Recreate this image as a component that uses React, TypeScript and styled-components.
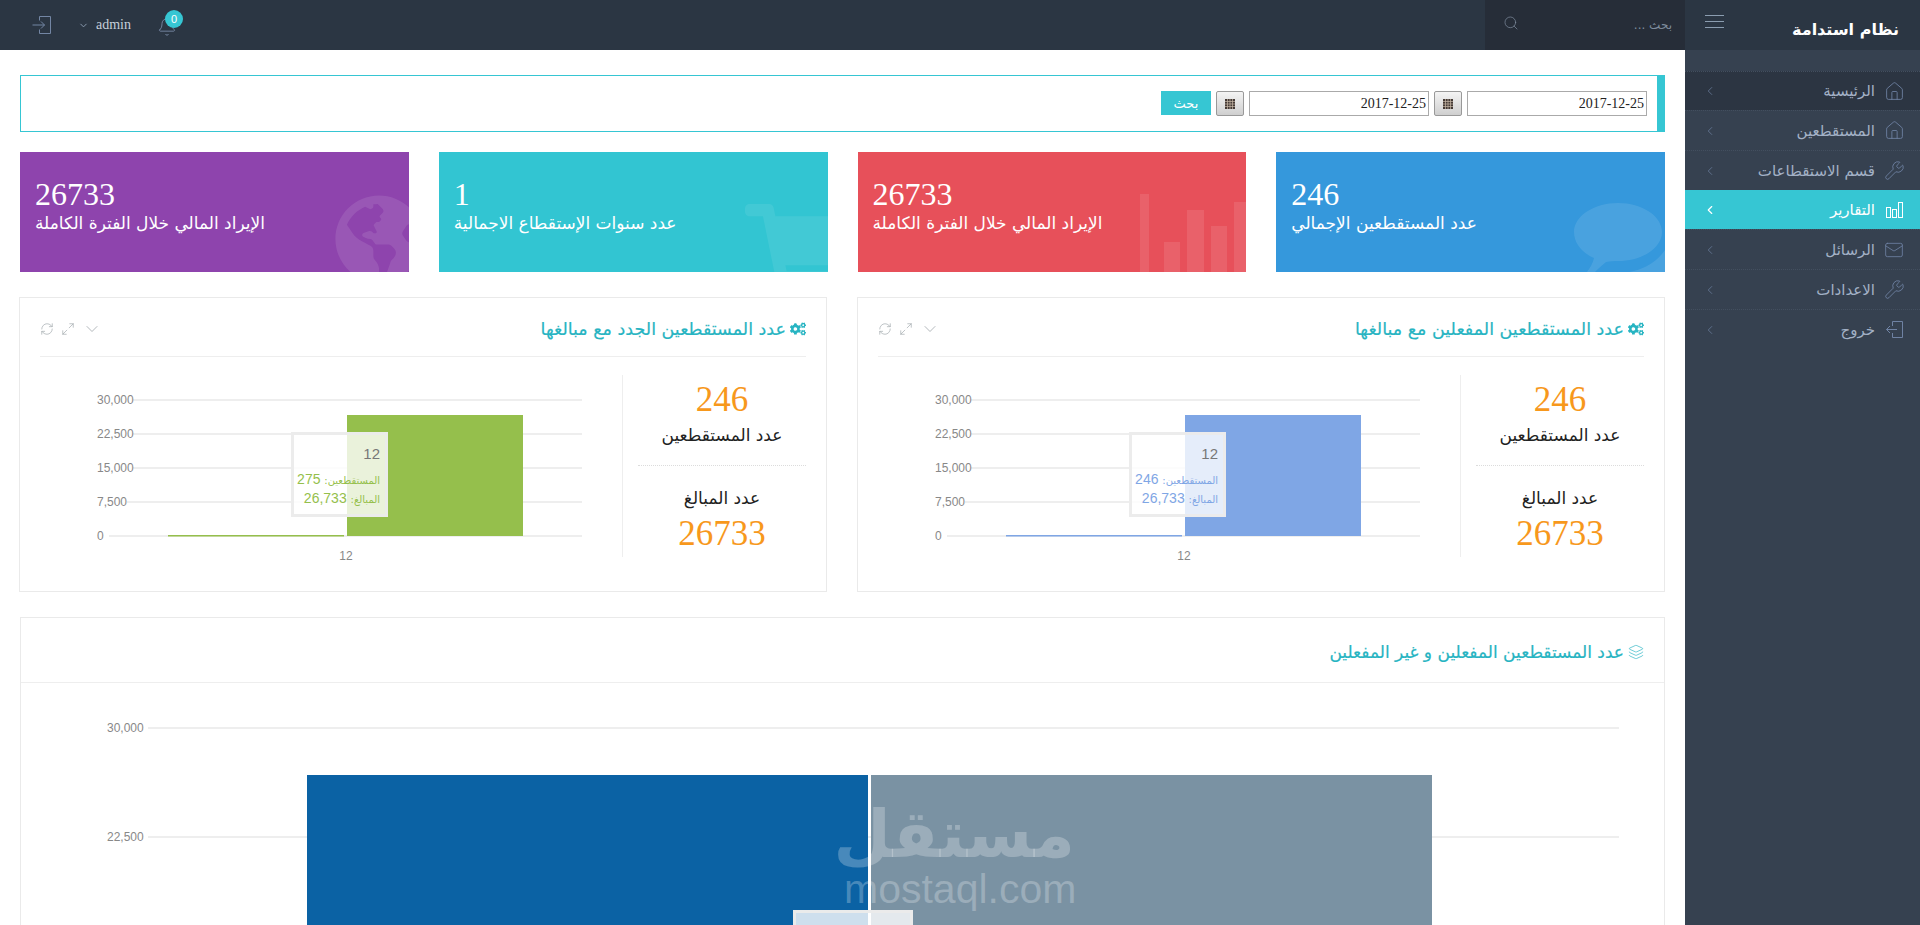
import type { ReactNode } from "react";
import styled, { createGlobalStyle } from "styled-components";
import { Bell, ChevronDown, ChevronLeft, Home, Layers, Mail, Maximize2, RefreshCw, Search, Wrench } from "lucide-react";
import { FaCogs, FaGlobeAmericas, FaShoppingCart } from "react-icons/fa";

const ARABIC = `"DejaVu Sans", "Noto Sans", sans-serif`;
const SERIF = `"Liberation Serif", serif`;
const ARIAL = `"Liberation Sans", sans-serif`;
const TEAL = "#36c6d3";

const GlobalStyles = createGlobalStyle`
    html, body {
        margin: 0;
        height: 100%;
        overflow: hidden;
        background: #fff;
    }
    * {
        box-sizing: border-box;
    }
`;

// Shell
const AppContainer = styled.div`
    position: relative;
    display: flex;
    height: 925px;
    width: 1920px;
    overflow: hidden;
    font-family: ${ARABIC};
`;

const SidebarWrap = styled.aside`
    width: 235px;
    flex: none;
    background: #364150;
`;

const Brand = styled.div`
    height: 50px;
    background: #2b3643;
    display: flex;
    align-items: center;
    justify-content: space-between;
    padding: 0 21px 0 20px;
`;

const BrandName = styled.span`
    color: #fff;
    font-size: 16px;
    line-height: 30px;
    font-weight: 700;
    margin-top: 10px;
    white-space: nowrap;
`;

const Burger = styled.div`
    width: 19px;
    height: 13px;
    margin-top: -7px;
    border-top: 1px solid #8b9db0;
    border-bottom: 1px solid #8b9db0;
    position: relative;
    &::after {
        content: "";
        position: absolute;
        top: 5px;
        left: 0;
        right: 0;
        height: 1px;
        background: #8b9db0;
    }
`;

const Menu = styled.nav`
    padding-top: 21px;
`;

const MenuRow = styled.div<{ $active?: boolean; $first?: boolean }>`
    height: ${(p) => (p.$active || p.$first ? "39px" : "40px")};
    display: flex;
    align-items: center;
    padding: 0 15px 0 18px;
    gap: 8px;
    background: ${(p) => (p.$active ? TEAL : p.$first ? "#2c3542" : "transparent")};
    color: ${(p) => (p.$active ? "#fff" : "#a3b1c6")};
    border-top: 1px dotted ${(p) => (p.$active ? TEAL : "#434f5f")};
    font-size: 15px;
    svg {
        flex: none;
        color: ${(p) => (p.$active ? "#fff" : "#6f82a3")};
    }
`;

const MenuIcon = styled.span`
    width: 22px;
    flex: none;
    display: flex;
    align-items: center;
    justify-content: center;
`;

const MenuLabel = styled.span`
    flex: 1;
    white-space: nowrap;
`;

const Main = styled.main`
    flex: 1;
    min-width: 0;
    display: flex;
    flex-direction: column;
`;

// Top bar
const TopBar = styled.header`
    height: 50px;
    flex: none;
    background: #2b3643;
    display: flex;
    align-items: center;
`;

const SearchBox = styled.div`
    width: 200px;
    height: 50px;
    background: #262d38;
    display: flex;
    align-items: center;
    justify-content: space-between;
    padding: 0 13px 0 18px;
    color: #7e8b9c;
    font-size: 12px;
    svg {
        margin-top: -5px;
        color: #8593a5;
    }
`;

const TopActions = styled.div`
    margin-right: auto;
    display: flex;
    align-items: center;
    direction: ltr;
    padding-left: 32px;
    width: 210px;
`;

const UserName = styled.span`
    font-family: ${SERIF};
    font-size: 14px;
    color: #c6cfda;
    margin-left: 7px;
`;

const UserMenu = styled.div`
    display: flex;
    align-items: center;
    margin-left: 27px;
    color: #8ea0b5;
`;

const BellWrap = styled.div`
    position: relative;
    margin: 3px 0 0 26px;
    height: 20px;
    color: #7f92ae;
`;

const BellBadge = styled.span`
    position: absolute;
    left: 8px;
    top: -7px;
    width: 18px;
    height: 18px;
    border-radius: 50%;
    background: ${TEAL};
    color: #fff;
    font: 11px/18px ${ARIAL};
    text-align: center;
`;

// Content
const Content = styled.div`
    padding: 25px 20px 0;
`;

const FilterBar = styled.div`
    height: 57px;
    border: 1px solid ${TEAL};
    border-right: 8px solid ${TEAL};
    display: flex;
    align-items: center;
    gap: 5px;
    padding: 0 10px;
`;

const DateInput = styled.input`
    width: 180px;
    height: 25px;
    border: 1px solid #aaa;
    background: #fff;
    font: 14px ${SERIF};
    color: #222;
    padding: 0 2px;
    text-align: right;
`;

const CalendarButton = styled.button`
    width: 28px;
    height: 25px;
    padding: 0;
    border: 1px solid #999;
    border-radius: 2px;
    background: linear-gradient(#f4f4f4, #cfcfcf);
    display: flex;
    align-items: center;
    justify-content: center;
`;

const SearchButton = styled.button`
    width: 50px;
    height: 24px;
    margin-top: -1px;
    border: 0;
    background: ${TEAL};
    color: #fff;
    font: 13px ${ARABIC};
    padding: 0;
`;

const CardGrid = styled.div`
    display: grid;
    grid-template-columns: repeat(4, 1fr);
    gap: 30px;
    margin-top: 20px;
`;

const StatCard = styled.div<{ $bg: string }>`
    position: relative;
    height: 120px;
    overflow: hidden;
    background: ${(p) => p.$bg};
    color: #fff;
    padding: 24px 15px 0;
    text-align: left;
`;

const CardNumber = styled.div`
    font: 32px/36px ${SERIF};
`;

const CardLabel = styled.div`
    position: relative;
    z-index: 1;
    font-size: 17px;
    line-height: 22px;
`;

const CardArt = styled.div<{ $left: number; $top: number; $alpha?: number }>`
    position: absolute;
    left: ${(p) => p.$left}px;
    top: ${(p) => p.$top}px;
    color: rgba(255, 255, 255, ${(p) => p.$alpha ?? 0.1});
    line-height: 0;
`;

const ChartGrid = styled.div`
    display: grid;
    grid-template-columns: repeat(2, 1fr);
    gap: 30px;
    margin-top: 25px;
`;

const Panel = styled.section`
    height: 295px;
    border: 1px solid #eaeaea;
    padding: 0 20px;
`;

const PanelHead = styled.div`
    height: 59px;
    padding-top: 4px;
    border-bottom: 1px solid #eeeeee;
    display: flex;
    align-items: center;
    justify-content: space-between;
`;

const PanelTitle = styled.h3<{ $size: number }>`
    margin: 0;
    display: flex;
    align-items: center;
    gap: 4px;
    font-size: ${(p) => p.$size}px;
    font-weight: 400;
    color: #27b4c2;
    -webkit-text-stroke: 0.2px #27b4c2;
`;

const PanelTools = styled.div`
    display: flex;
    align-items: center;
    gap: 7px;
    color: #a4aaaf;
    direction: ltr;
`;

const PanelBody = styled.div`
    display: flex;
    padding-top: 18px;
`;

const StatColumn = styled.div`
    width: 184px;
    height: 182px;
    flex: none;
    border-left: 1px solid #eeeeee;
    display: flex;
    flex-direction: column;
    text-align: center;
`;

const StatBlock = styled.div<{ $top?: boolean }>`
    margin-left: 15px;
    height: 91px;
    padding-top: ${(p) => (p.$top ? "5px" : "17px")};
    border-bottom: ${(p) => (p.$top ? "1px dotted #dcdcdc" : "0")};
`;

const StatNumber = styled.div`
    font: 35px/40px ${SERIF};
    color: #f7981c;
`;

const StatLabel = styled.div`
    font-size: 17px;
    line-height: 24px;
    margin: 3px 0 4px;
    color: #222;
    white-space: nowrap;
`;

const ChartBox = styled.div`
    position: relative;
    flex: 1;
    height: 182px;
`;

const ChartSvg = styled.svg`
    display: block;
    direction: ltr;
    overflow: visible;
`;

const AxisText = styled.text`
    font: 12px ${ARIAL};
    fill: #888;
`;

const Tip = styled.div<{ $left: number; $top: number; $w: number; $h: number }>`
    position: absolute;
    left: ${(p) => p.$left}px;
    top: ${(p) => p.$top}px;
    width: ${(p) => p.$w}px;
    height: ${(p) => p.$h}px;
    background: rgba(255, 255, 255, 0.8);
    border: 3px solid rgba(235, 235, 235, 0.95);
    padding: 9px 5px 0 0;
    text-align: right;
    font-family: ${ARIAL};
`;

const TipTitle = styled.div`
    font-size: 15px;
    line-height: 20px;
    margin-bottom: 6px;
    color: #777;
`;

const TipRow = styled.div<{ $color: string }>`
    font-size: 14px;
    line-height: 19px;
    color: ${(p) => p.$color};
    white-space: nowrap;
    span {
        font: 10px ${ARABIC};
    }
`;

const WidePanel = styled.section`
    margin-top: 25px;
    height: 400px;
    border: 1px solid #eaeaea;
`;

const WideHead = styled.div`
    height: 65px;
    padding: 4px 20px 0;
    border-bottom: 1px solid #eeeeee;
    display: flex;
    align-items: center;
`;

const WideBody = styled.div`
    position: relative;
    height: 300px;
`;

const Watermark = styled.div`
    position: absolute;
    left: 844px;
    top: 797px;
    width: 231px;
    text-align: center;
    color: rgba(255, 255, 255, 0.25);
    pointer-events: none;
`;

const WatermarkAr = styled.div`
    font: 700 66px/76px ${ARABIC};
    padding-left: 6px;
`;

const WatermarkEn = styled.div`
    font: 41px/32px ${ARIAL};
    direction: ltr;
    white-space: nowrap;
`;

// Icons
const EnterIcon = () => (
    <svg width="19" height="18" viewBox="0 0 19 18" fill="none" stroke="#7386a4" strokeWidth="1">
        <path d="M7.5 4.5V.5h11v17h-11v-4" />
        <path d="M.5 9h12M9 5.5 12.5 9 9 12.5" />
    </svg>
);

const ExitIcon = () => (
    <svg width="17" height="17" viewBox="0 0 17 17" fill="none" stroke="currentColor" strokeWidth="1">
        <path d="M6.5 5V.5h10v16h-10V12" />
        <path d="M11 8.5H.5M4 5 .5 8.5 4 12" />
    </svg>
);

const ChartIcon = () => (
    <svg width="17" height="16" viewBox="0 0 17 16" fill="none" stroke="currentColor" strokeWidth="1">
        <rect x=".5" y="5.5" width="4" height="10" />
        <rect x="6.5" y="7.5" width="4" height="8" />
        <rect x="12.5" y=".5" width="4" height="15" />
    </svg>
);

const GridGlyph = () => (
    <svg width="10" height="10" viewBox="0 0 10 10">
        <rect width="10" height="10" fill="#443a36" />
        <path d="M2.5 0v10M5 0v10M7.5 0v10M0 2.5h10M0 5h10M0 7.5h10" stroke="#c9b9a8" strokeWidth=".7" />
    </svg>
);

const BarsArt = () => (
    <svg width="106" height="78" viewBox="0 0 106 78" fill="currentColor">
        <rect x="0" y="0" width="9" height="78" />
        <rect x="24" y="48" width="16" height="30" />
        <rect x="47" y="16" width="17" height="62" />
        <rect x="71" y="32" width="16" height="46" />
        <rect x="94" y="8" width="12" height="70" />
    </svg>
);

const BubbleArt = () => (
    <svg width="91" height="69" viewBox="0 0 91 69" fill="currentColor">
        <path d="M44 0c24 0 44 13 44 29S68 58 44 58c-4 0-8 0-12 1-4 3-8 7-11 10h-8c3-4 6-9 7-14C8 50 0 40 0 29 0 13 20 0 44 0Z" />
        <path d="M91 47v22H55c14-2 28-10 36-22Z" />
    </svg>
);

type ChartProps = { color: string; tipValue: string };

const MiniChart = ({ color, tipValue }: ChartProps) => {
    const rows = [
        { label: "30,000", y: 25, from: 93 },
        { label: "22,500", y: 59, from: 93 },
        { label: "15,000", y: 93, from: 93 },
        { label: "7,500", y: 127, from: 87 },
        { label: "0", y: 161, from: 69 },
    ];
    return (
        <ChartBox>
            <ChartSvg width="582" height="182">
                {rows.map((r) => (
                    <g key={r.label}>
                        <line x1={r.from} x2="542" y1={r.y} y2={r.y} stroke="#e8e8e8" strokeWidth="1.5" />
                        <AxisText x="57" y={r.y + 4}>
                            {r.label}
                        </AxisText>
                    </g>
                ))}
                <rect x="128" y="160" width="176" height="1.5" fill={color} />
                <rect x="307" y="40" width="176" height="121" fill={color} />
                <AxisText x="306" y="185" textAnchor="middle">
                    12
                </AxisText>
            </ChartSvg>
            <Tip $left={251} $top={57} $w={97} $h={85}>
                <TipTitle>12</TipTitle>
                <TipRow $color={color}>
                    <span>المستقطعين:</span> {tipValue}
                </TipRow>
                <TipRow $color={color}>
                    <span>المبالغ:</span> 26,733
                </TipRow>
            </Tip>
        </ChartBox>
    );
};

const ChartPanel = ({ title, color, tipValue }: { title: string } & ChartProps) => (
    <Panel>
        <PanelHead>
            <PanelTitle $size={17.5}>
                <FaCogs size={16} />
                {title}
            </PanelTitle>
            <PanelTools>
                <RefreshCw size={14} strokeWidth={1.2} />
                <Maximize2 size={14} strokeWidth={1.2} />
                <ChevronDown size={20} strokeWidth={1} />
            </PanelTools>
        </PanelHead>
        <PanelBody>
            <StatColumn>
                <StatBlock $top>
                    <StatNumber>246</StatNumber>
                    <StatLabel>عدد المستقطعين</StatLabel>
                </StatBlock>
                <StatBlock>
                    <StatLabel>عدد المبالغ</StatLabel>
                    <StatNumber>26733</StatNumber>
                </StatBlock>
            </StatColumn>
            <MiniChart color={color} tipValue={tipValue} />
        </PanelBody>
    </Panel>
);

const menuItems: { label: string; icon: ReactNode; first?: boolean; active?: boolean }[] = [
    { label: "الرئيسية", icon: <Home size={21} strokeWidth={1} />, first: true },
    { label: "المستقطعين", icon: <Home size={21} strokeWidth={1} /> },
    { label: "قسم الاستقطاعات", icon: <Wrench size={21} strokeWidth={1} /> },
    { label: "التقارير", icon: <ChartIcon />, active: true },
    { label: "الرسائل", icon: <Mail size={20} strokeWidth={1} /> },
    { label: "الاعدادات", icon: <Wrench size={21} strokeWidth={1} /> },
    { label: "خروج", icon: <ExitIcon /> },
];

function App() {
    return (
        <AppContainer dir="rtl">
            <GlobalStyles />

            <SidebarWrap>
                <Brand>
                    <BrandName>نظام استدامة</BrandName>
                    <Burger />
                </Brand>
                <Menu>
                    {menuItems.map((item) => (
                        <MenuRow key={item.label} $active={item.active} $first={item.first}>
                            <MenuIcon>{item.icon}</MenuIcon>
                            <MenuLabel>{item.label}</MenuLabel>
                            <ChevronLeft size={14} strokeWidth={item.active ? 2 : 1.2} />
                        </MenuRow>
                    ))}
                </Menu>
            </SidebarWrap>

            <Main>
                <TopBar>
                    <SearchBox>
                        <span>بحث ...</span>
                        <Search size={16} strokeWidth={1} />
                    </SearchBox>
                    <TopActions>
                        <EnterIcon />
                        <UserMenu>
                            <ChevronDown size={11} />
                            <UserName>admin</UserName>
                        </UserMenu>
                        <BellWrap>
                            <Bell size={20} strokeWidth={1} />
                            <BellBadge>0</BellBadge>
                        </BellWrap>
                    </TopActions>
                </TopBar>

                <Content>
                    <FilterBar>
                        <DateInput readOnly value="2017-12-25" />
                        <CalendarButton>
                            <GridGlyph />
                        </CalendarButton>
                        <DateInput readOnly value="2017-12-25" />
                        <CalendarButton>
                            <GridGlyph />
                        </CalendarButton>
                        <SearchButton>بحث</SearchButton>
                    </FilterBar>

                    <CardGrid>
                        <StatCard $bg="#3598dc">
                            <CardNumber>246</CardNumber>
                            <CardLabel>عدد المستقطعين الإجمالي</CardLabel>
                            <CardArt $left={298} $top={51}>
                                <BubbleArt />
                            </CardArt>
                        </StatCard>
                        <StatCard $bg="#e7505a">
                            <CardNumber>26733</CardNumber>
                            <CardLabel>الإيراد المالي خلال الفترة الكاملة</CardLabel>
                            <CardArt $left={282} $top={42}>
                                <BarsArt />
                            </CardArt>
                        </StatCard>
                        <StatCard $bg="#32c5d2">
                            <CardNumber>1</CardNumber>
                            <CardLabel>عدد سنوات الإستقطاع الاجمالية</CardLabel>
                            <CardArt $left={306} $top={46} $alpha={0.08}>
                                <FaShoppingCart size={110} />
                            </CardArt>
                        </StatCard>
                        <StatCard $bg="#8e44ad">
                            <CardNumber>26733</CardNumber>
                            <CardLabel>الإيراد المالي خلال الفترة الكاملة</CardLabel>
                            <CardArt $left={314} $top={42}>
                                <FaGlobeAmericas size={90} />
                            </CardArt>
                        </StatCard>
                    </CardGrid>

                    <ChartGrid>
                        <ChartPanel title="عدد المستقطعين المفعلين مع مبالغها" color="#7fa6e5" tipValue="246" />
                        <ChartPanel title="عدد المستقطعين الجدد مع مبالغها" color="#95bf4c" tipValue="275" />
                    </ChartGrid>

                    <WidePanel>
                        <WideHead>
                            <PanelTitle $size={17}>
                                <Layers size={16} strokeWidth={1} />
                                عدد المستقطعين المفعلين و غير المفعلين
                            </PanelTitle>
                        </WideHead>
                        <WideBody>
                            <ChartSvg width="1643" height="300">
                                <line x1="127" x2="1598" y1="45" y2="45" stroke="#e8e8e8" strokeWidth="1.5" />
                                <line x1="127" x2="1598" y1="154" y2="154" stroke="#e8e8e8" strokeWidth="1.5" />
                                <AxisText x="86" y="49">
                                    30,000
                                </AxisText>
                                <AxisText x="86" y="158">
                                    22,500
                                </AxisText>
                                <rect x="286" y="92" width="561" height="208" fill="#0b62a4" />
                                <rect x="850" y="92" width="561" height="208" fill="#7a92a3" />
                            </ChartSvg>
                            <Tip $left={772} $top={227} $w={120} $h={80} />
                        </WideBody>
                    </WidePanel>
                </Content>
            </Main>

            <Watermark dir="rtl">
                <WatermarkAr>مستقل</WatermarkAr>
                <WatermarkEn>mostaql.com</WatermarkEn>
            </Watermark>
        </AppContainer>
    );
}

export default App;
